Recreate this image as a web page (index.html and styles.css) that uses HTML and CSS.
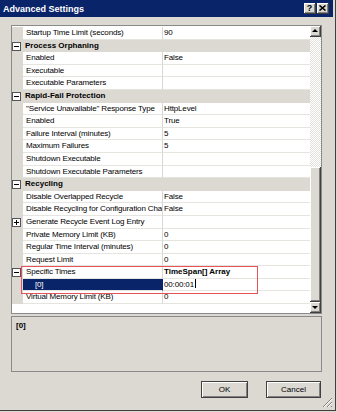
FILE: index.html
```html
<!DOCTYPE html>
<html lang="en">
<head>
  <meta charset="UTF-8">
  <title>Advanced Settings</title>
  <link rel="stylesheet" href="styles.css">
</head>
<body>
<div class="window">
  <div class="titlebar">
    <span class="title">Advanced Settings</span>
    <span class="caption-btn help">?</span>
    <span class="caption-btn close">
      <svg width="7" height="6" viewBox="0 0 7 6"><path d="M0.5 0.5 L6.5 5.5 M6.5 0.5 L0.5 5.5" stroke="#000" stroke-width="1.6"/></svg>
    </span>
  </div>

  <div class="content">
    <div class="grid">
      <div class="rows">
        <div class="row"><span class="gutter"></span><span class="name">Startup Time Limit (seconds)</span><span class="value">90</span></div>
        <div class="row cat"><span class="gutter"><i class="toggle"></i></span><span class="name">Process Orphaning</span></div>
        <div class="row"><span class="gutter"></span><span class="name">Enabled</span><span class="value">False</span></div>
        <div class="row"><span class="gutter"></span><span class="name">Executable</span><span class="value"></span></div>
        <div class="row"><span class="gutter"></span><span class="name">Executable Parameters</span><span class="value"></span></div>
        <div class="row cat"><span class="gutter"><i class="toggle"></i></span><span class="name">Rapid-Fail Protection</span></div>
        <div class="row"><span class="gutter"></span><span class="name">"Service Unavailable" Response Type</span><span class="value">HttpLevel</span></div>
        <div class="row"><span class="gutter"></span><span class="name">Enabled</span><span class="value">True</span></div>
        <div class="row"><span class="gutter"></span><span class="name">Failure Interval (minutes)</span><span class="value">5</span></div>
        <div class="row"><span class="gutter"></span><span class="name">Maximum Failures</span><span class="value">5</span></div>
        <div class="row"><span class="gutter"></span><span class="name">Shutdown Executable</span><span class="value"></span></div>
        <div class="row"><span class="gutter"></span><span class="name">Shutdown Executable Parameters</span><span class="value"></span></div>
        <div class="row cat"><span class="gutter"><i class="toggle"></i></span><span class="name">Recycling</span></div>
        <div class="row"><span class="gutter"></span><span class="name">Disable Overlapped Recycle</span><span class="value">False</span></div>
        <div class="row"><span class="gutter"></span><span class="name">Disable Recycling for Configuration Changes</span><span class="value">False</span></div>
        <div class="row"><span class="gutter"><i class="toggle plus"></i></span><span class="name">Generate Recycle Event Log Entry</span><span class="value"></span></div>
        <div class="row"><span class="gutter"></span><span class="name">Private Memory Limit (KB)</span><span class="value">0</span></div>
        <div class="row"><span class="gutter"></span><span class="name">Regular Time Interval (minutes)</span><span class="value">0</span></div>
        <div class="row"><span class="gutter"></span><span class="name">Request Limit</span><span class="value">0</span></div>
        <div class="row"><span class="gutter"><i class="toggle"></i></span><span class="name">Specific Times</span><span class="value strong">TimeSpan[] Array</span></div>
        <div class="row selected"><span class="gutter"></span><span class="name">[0]</span><span class="value">00:00:01<i class="caret"></i></span></div>
        <div class="row"><span class="gutter"></span><span class="name">Virtual Memory Limit (KB)</span><span class="value">0</span></div>
      </div>
      <div class="vscroll">
        <div class="sb-btn up"></div>
        <div class="sb-track"><div class="sb-thumb"></div></div>
        <div class="sb-btn down"></div>
      </div>
    </div>

    <div class="desc"><b>[0]</b></div>

    <div class="actions">
      <button class="btn ok">OK</button>
      <button class="btn cancel">Cancel</button>
    </div>
  </div>

  <!-- red call-out drawn over the grid -->
  <div class="callout"></div>

  <div class="grip">
    <svg width="11" height="11" viewBox="0 0 11 11">
      <path d="M10 1 L1 10 M10 5 L5 10 M10 9 L9 10" stroke="#808080" stroke-width="1"/>
      <path d="M10 2 L2 10 M10 6 L6 10" stroke="#fff" stroke-width="1"/>
    </svg>
  </div>
</div>
</body>
</html>
```

FILE: styles.css
```css
* {
  box-sizing: border-box;
}

body {
  margin: 0;
  background: #dcd9d3;
  font-family: "Liberation Sans", Arial, sans-serif;
  font-size: 8px;
  color: #000;
}

.window {
  position: relative;
  width: 336px;
  height: 411px;
  background: #dcd9d3;
  border-right: 1px solid #404040;
  border-bottom: 1px solid #404040;
}

/* title bar */
.titlebar {
  display: flex;
  align-items: center;
  height: 17px;
  margin-right: 2px;
  padding: 0 4px 0 3px;
  background: #0a246a;
}

.title {
  flex: 1;
  color: #fff;
  font-weight: bold;
  font-size: 9px;
}

.caption-btn {
  display: flex;
  align-items: center;
  justify-content: center;
  width: 12px;
  height: 11px;
  background: #dcd9d3;
  border-right: 1px solid #404040;
  border-bottom: 1px solid #404040;
  box-shadow: inset 1px 1px #fff, inset -1px -1px #808080;
  font-weight: bold;
  font-size: 9px;
  line-height: 1;
}

.caption-btn.close {
  margin-left: 1px;
}

/* content */
.content {
  padding: 8px 13px 0 11px;
}

.grid {
  display: flex;
  height: 289px;
  border: 1px solid #8a8a8a;
  background: #fff;
}

.rows {
  width: 299px;
  padding-top: 1px;
  overflow: hidden;
}

.row {
  display: flex;
  height: 12.6px;
  line-height: 12px;
  white-space: nowrap;
  letter-spacing: -0.15px;
}

.gutter {
  position: relative;
  width: 11px;
  flex: none;
  background: #dcd9d3;
}

.name {
  width: 140px;
  flex: none;
  overflow: hidden;
  padding-left: 3px;
  border-right: 1px solid #dad7d1;
  border-bottom: 1px solid #e6e4df;
}

.value {
  flex: 1;
  overflow: hidden;
  padding-left: 1px;
  border-bottom: 1px solid #e6e4df;
}

.value.strong {
  font-weight: bold;
  letter-spacing: 0;
}

.row.cat {
  background: #dcd9d3;
  font-weight: bold;
  letter-spacing: 0;
}

.row.cat .name {
  width: auto;
  flex: 1;
  border: 0;
  padding-left: 2px;
}

.row.selected .name {
  background: #0a246a;
  color: #fff;
  padding-left: 12px;
  border-right-color: #0a246a;
}

.caret {
  display: inline-block;
  width: 1px;
  height: 9px;
  margin-left: 1px;
  vertical-align: -1px;
  background: #000;
}

.toggle {
  position: absolute;
  left: 0;
  top: 2px;
  width: 9px;
  height: 9px;
  border: 1px solid #555;
  background: #fff;
}

.toggle::before {
  content: "";
  position: absolute;
  left: 1px;
  top: 3px;
  width: 5px;
  height: 1px;
  background: #000;
}

.toggle.plus::after {
  content: "";
  position: absolute;
  left: 3px;
  top: 1px;
  width: 1px;
  height: 5px;
  background: #000;
}

/* scrollbar */
.vscroll {
  display: flex;
  flex-direction: column;
  width: 11px;
}

.sb-btn,
.sb-thumb {
  background: #dcd9d3;
  border-right: 1px solid #404040;
  border-bottom: 1px solid #404040;
  box-shadow: inset 1px 1px #fff, inset -1px -1px #808080;
}

.sb-btn {
  position: relative;
  height: 11px;
  flex: none;
}

.sb-btn::after {
  content: "";
  position: absolute;
  left: 2px;
  border-left: 3px solid transparent;
  border-right: 3px solid transparent;
}

.sb-btn.up::after {
  top: 3px;
  border-bottom: 3px solid #000;
}

.sb-btn.down::after {
  top: 4px;
  border-top: 3px solid #000;
}

.sb-track {
  flex: 1;
  display: flex;
  flex-direction: column;
  padding-top: 130px;
  background: repeating-conic-gradient(#fff 0 25%, #e4e2dd 0 50%) 0 0 / 2px 2px;
}

.sb-thumb {
  flex: 1;
}

/* description */
.desc {
  height: 56px;
  margin-top: 2px;
  padding: 4px 4px;
  border: 1px solid #8a8a8a;
}

.actions {
  display: flex;
  justify-content: flex-end;
  gap: 18px;
  margin-top: 9px;
  padding-right: 1px;
}

.btn {
  height: 17px;
  padding: 0;
  font-family: "Liberation Sans", Arial, sans-serif;
  font-size: 8px;
  color: #000;
  background: #dcd9d3;
  border: 1px solid #404040;
  box-shadow: inset 1px 1px #fff, inset -1px -1px #808080;
}

.btn.ok {
  width: 47px;
}

.btn.cancel {
  width: 55px;
}

.callout {
  position: absolute;
  left: 21px;
  top: 266px;
  width: 237px;
  height: 28px;
  border: 1px solid #e8525a;
}

.grip {
  position: absolute;
  right: 2px;
  bottom: 2px;
  width: 11px;
  height: 11px;
}
```
